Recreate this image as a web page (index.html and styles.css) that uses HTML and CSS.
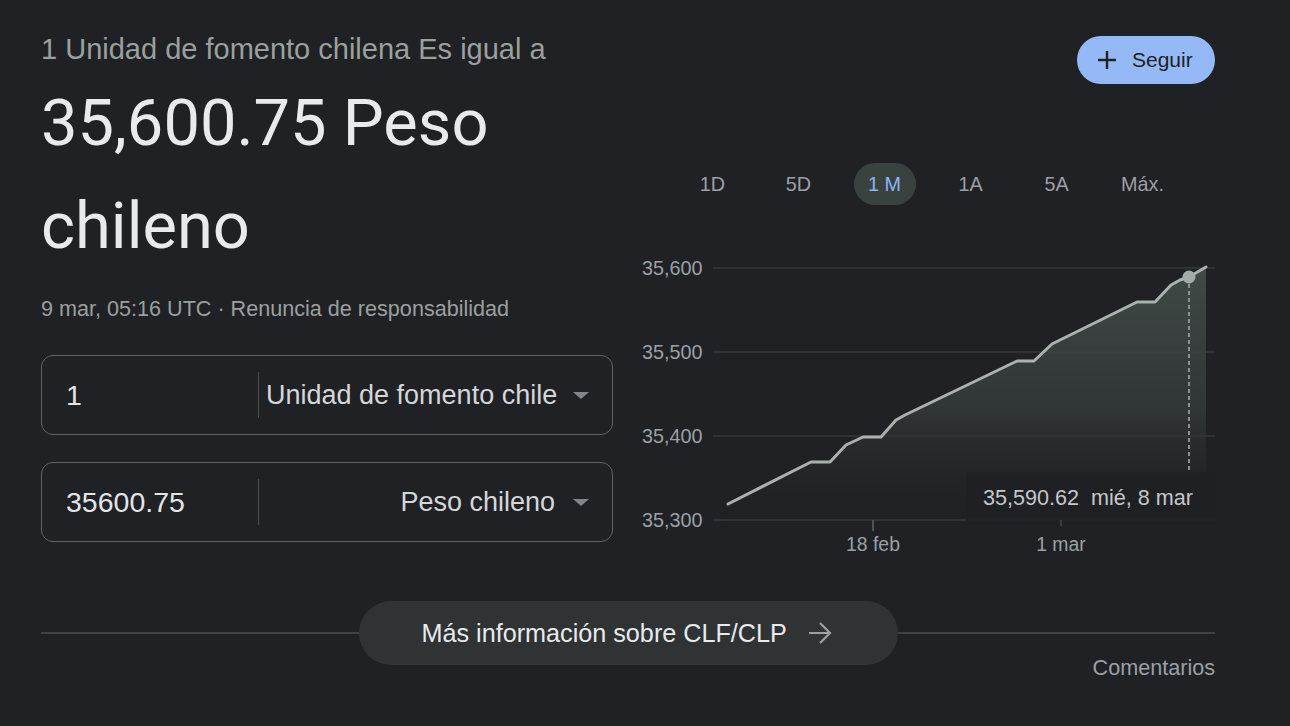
FILE: index.html
```html
<!DOCTYPE html>
<html lang="es">
<head>
<meta charset="utf-8">
<title>CLF a CLP</title>
<link rel="stylesheet" href="styles.css">
</head>
<body>
<div class="main">
  <div class="left">
    <div class="subtitle">1 Unidad de fomento chilena Es igual a</div>
    <div class="big">35,600.75 Peso chileno</div>
    <div class="date">9 mar, 05:16 UTC · Renuncia de responsabilidad</div>
    <div class="box first">
      <div class="amount">1</div>
      <div class="divider"></div>
      <div class="select"><span class="select-text">Unidad de fomento chile</span><span class="caret"></span></div>
    </div>
    <div class="box second">
      <div class="amount">35600.75</div>
      <div class="divider"></div>
      <div class="select right"><span class="select-text">Peso chileno</span><span class="caret"></span></div>
    </div>
  </div>
  <div class="rightcol">
    <div class="follow-row">
      <div class="follow">
        <svg class="plus" width="20" height="20" viewBox="0 0 20 20"><path d="M10 1v18M1 10h18" stroke="#202124" stroke-width="2.4" fill="none"/></svg>
        <span>Seguir</span>
      </div>
    </div>
    <div class="tabs">
      <div class="tab"><span>1D</span></div>
      <div class="tab"><span>5D</span></div>
      <div class="tab"><span class="active">1 M</span></div>
      <div class="tab"><span>1A</span></div>
      <div class="tab"><span>5A</span></div>
      <div class="tab"><span>Máx.</span></div>
    </div>
    <svg class="chart" width="575" height="320" viewBox="640 240 575 320">
      <defs>
        <linearGradient id="fillg" gradientUnits="userSpaceOnUse" x1="0" y1="267" x2="0" y2="525">
          <stop offset="0" stop-color="#414a47" stop-opacity="1"/>
          <stop offset="0.55" stop-color="#353b3a" stop-opacity="0.8"/>
          <stop offset="1" stop-color="#202124" stop-opacity="0"/>
        </linearGradient>
      </defs>
      <g class="grid">
        <line x1="713" y1="268" x2="1215" y2="268"/>
        <line x1="713" y1="352" x2="1215" y2="352"/>
        <line x1="713" y1="436" x2="1215" y2="436"/>
        <line x1="713" y1="520" x2="1215" y2="520"/>
      </g>
      <g class="ylab">
        <text x="642" y="275">35,600</text>
        <text x="642" y="359">35,500</text>
        <text x="642" y="443">35,400</text>
        <text x="642" y="527">35,300</text>
      </g>
      <path d="M728,504 L811,462 L830,462 L846,445 L863,437 L881,437 L896,420 L905,415 L1017,361 L1034,361 L1052,344 L1060,340 L1137,302 L1155,302 L1171,285 L1180,280 L1189,277 L1206,267 L1206,525 L728,525 Z" fill="url(#fillg)"/>
      <rect x="966" y="472" width="249" height="52" fill="#202124" opacity="0.92"/>
      <line x1="1189" y1="277" x2="1189" y2="472" class="dash"/>
      <polyline class="line" points="728,504 811,462 830,462 846,445 863,437 881,437 896,420 905,415 1017,361 1034,361 1052,344 1060,340 1137,302 1155,302 1171,285 1180,280 1189,277 1206,267"/>
      <circle cx="1189" cy="277" r="6.5" fill="#a3aca8"/>
      <text class="tip" x="983" y="505">35,590.62  mié, 8 mar</text>
      <line class="tick" x1="873" y1="520" x2="873" y2="531"/>
      <line class="tick faint" x1="1061" y1="520" x2="1061" y2="526"/>
      <text class="xlab" x="873" y="551">18 feb</text>
      <text class="xlab" x="1061" y="551">1 mar</text>
    </svg>
  </div>
</div>
<div class="footer">
  <div class="more">
    <span>Más información sobre CLF/CLP</span>
    <svg class="arrow" width="24" height="24" viewBox="0 0 24 24"><path d="M1 12h21M12 2l10 10-10 10" stroke="#9aa0a6" stroke-width="2.2" fill="none"/></svg>
  </div>
</div>
<div class="comments">Comentarios</div>
</body>
</html>
```
FILE: styles.css
```css
* { box-sizing: border-box; }
html, body { margin: 0; padding: 0; }
body {
  background: #202124;
  width: 1290px;
  height: 726px;
  overflow: hidden;
  font-family: "Liberation Sans", Arial, sans-serif;
  color: #e8eaed;
}
.main {
  display: grid;
  grid-template-columns: 572px 575px;
  column-gap: 27px;
  padding-left: 41px;
  height: 601px;
}
.left { padding-top: 31px; }
.subtitle {
  font-size: 29px;
  line-height: 36px;
  color: #9aa09f;
  white-space: nowrap;
}
.big {
  margin-top: 5px;
  font-family: Roboto, "Liberation Sans", sans-serif;
  font-size: 65px;
  line-height: 103px;
  color: #e8eaed;
}
.date {
  margin-top: 17px;
  font-size: 21.6px;
  line-height: 28px;
  color: #9aa09f;
  white-space: nowrap;
}
.box {
  height: 80px;
  border: 1px solid #5f6368;
  border-radius: 12px;
  display: flex;
  align-items: center;
}
.box.first { margin-top: 32px; }
.box.second { margin-top: 27px; }
.amount {
  width: 216px;
  padding-left: 24px;
  font-size: 28.5px;
  color: #e3e5e8;
}
.divider {
  width: 1px;
  height: 46px;
  background: #4a4e51;
}
.select {
  flex: 1;
  display: flex;
  align-items: center;
  padding-left: 7px;
  padding-right: 23px;
  min-width: 0;
}
.select-text {
  flex: 1;
  min-width: 0;
  white-space: nowrap;
  font-size: 27px;
  color: #d4d7da;
}
.select.right .select-text { text-align: right; }
.caret {
  margin-left: 18px;
  width: 0;
  height: 0;
  border-left: 8px solid transparent;
  border-right: 8px solid transparent;
  border-top: 7px solid #80868b;
}
.rightcol { display: flex; flex-direction: column; }
.follow-row {
  display: flex;
  justify-content: flex-end;
  margin-top: 36px;
}
.follow {
  height: 48px;
  width: 138px;
  border-radius: 24px;
  background: #94b9f6;
  display: flex;
  align-items: center;
  padding-left: 20px;
  gap: 15px;
  color: #202124;
  font-size: 21px;
}
.plus { display: block; }
.tabs {
  margin-top: 79px;
  display: flex;
  justify-content: center;
}
.tab {
  width: 86px;
  height: 42px;
  display: flex;
  justify-content: center;
  align-items: center;
  font-size: 19.8px;
  color: #9aa0a6;
}
.tab .active {
  width: 62px;
  height: 42px;
  line-height: 42px;
  text-align: center;
  border-radius: 21px;
  background: #3a4240;
  color: #8ab4f8;
}
.chart { display: block; margin-top: 35px; }
.grid line { stroke: #3f4446; stroke-width: 1.2; }
.ylab text {
  font-family: "Liberation Sans", Arial, sans-serif;
  font-size: 19.8px;
  fill: #9aa0a6;
}
.line { fill: none; stroke: #a9b2ae; stroke-width: 3; stroke-linejoin: round; stroke-linecap: round; }
.dash { stroke: #8a9290; stroke-width: 2; stroke-dasharray: 4 3; }
.tip {
  font-family: "Liberation Sans", Arial, sans-serif;
  font-size: 21.6px;
  fill: #c4c7c9;
  white-space: pre;
}
.tick { stroke: #5f6368; stroke-width: 1.5; }
.tick.faint { stroke: #45494c; }
.xlab {
  font-family: "Liberation Sans", Arial, sans-serif;
  font-size: 19.4px;
  fill: #9aa0a6;
  text-anchor: middle;
}
.footer {
  margin-left: 41px;
  width: 1174px;
  height: 64px;
  display: flex;
  align-items: center;
}
.footer::before, .footer::after {
  content: "";
  flex: 1;
  height: 2px;
  background: #3c4442;
}
.more {
  width: 539px;
  height: 64px;
  border-radius: 32px;
  background: #2f3333;
  display: flex;
  align-items: center;
  padding-left: 63px;
  gap: 21px;
  font-size: 25.2px;
  color: #e8eaed;
  white-space: nowrap;
}
.arrow { display: block; }
.comments {
  margin-top: -10px;
  width: 1215px;
  text-align: right;
  font-size: 21.6px;
  line-height: 26px;
  color: #9aa0a6;
}
```
